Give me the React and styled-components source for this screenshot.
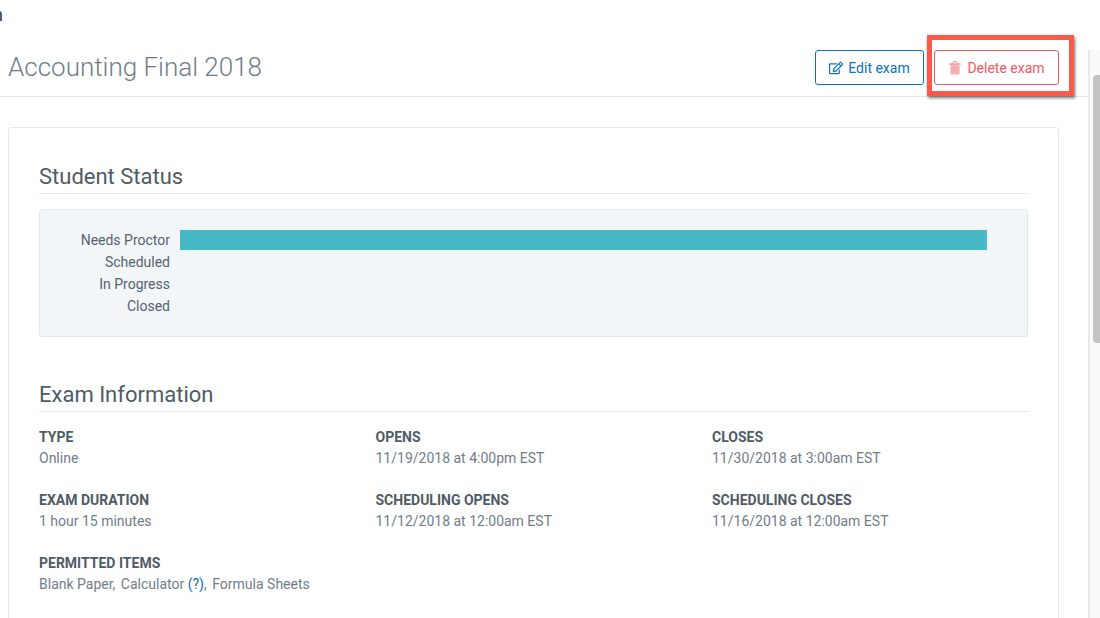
import React from "react";
import styled, { createGlobalStyle } from "styled-components";
import { FaRegEdit } from "react-icons/fa";

const Global = createGlobalStyle`
  html, body { margin: 0; padding: 0; background: #fff; height: 100%; overflow: hidden; }
  body { font-family: Roboto, "Liberation Sans", sans-serif; color: #4f5b66; }
`;

const Page = styled.div`
  width: 1100px;
  height: 618px;
  overflow: hidden;
  display: flex;
  flex-direction: column;
`;
const TopStrip = styled.div`
  height: 50px;
  flex: none;
  overflow: hidden;
  font-size: 18px;
  line-height: 18px;
  color: #2b3a44;
  padding-top: 6px;
  margin-left: -7px;
  box-sizing: border-box;
`;
const Body = styled.div`
  flex: 1;
  display: flex;
  min-height: 0;
`;
const Main = styled.main`
  width: 1089px;
  flex: none;
  box-sizing: border-box;
  border-right: 1px solid #e4e9ec;
  min-height: 0;
`;
const Scrollbar = styled.div`
  flex: 1;
  background: #fafafa;
  border-left: 1px solid #ececec;
  padding: 25px 0 0 3px;
`;
const Thumb = styled.div`
  height: 268px;
  background: #c3c3c3;
  border-radius: 4px 0 0 4px;
`;
const Header = styled.header`
  height: 47px;
  box-sizing: border-box;
  border-bottom: 1px solid #e3e7eb;
  display: flex;
  align-items: flex-start;
  justify-content: space-between;
  padding: 0 29px 0 8px;
`;
const Title = styled.h1`
  margin: 0;
  font-size: 26px;
  line-height: 34px;
  font-weight: 300;
  color: #6f7d8b;
`;
const Actions = styled.div`
  display: flex;
  gap: 10px;
  position: relative;
`;
const Button = styled.button`
  height: 35px;
  box-sizing: border-box;
  display: inline-flex;
  align-items: center;
  justify-content: center;
  gap: ${p => p.$gap}px;
  width: ${p => p.$w}px;
  border: 1px solid ${p => p.$color};
  color: ${p => p.$color};
  background: #fff;
  border-radius: 3px;
  font-family: inherit;
  font-size: 14px;
  padding: 0 0 0 ${p => p.$gap - 5}px;
`;
const Highlight = styled.div`
  position: absolute;
  left: 112px;
  top: -15px;
  width: 147px;
  height: 61px;
  box-sizing: border-box;
  border: 5px solid #fb5a4b;
  box-shadow: 1px 2px 3px rgba(0,0,0,.55);
  pointer-events: none;
`;
const Card = styled.section`
  margin: 30px 29px 0 8px;
  border: 1px solid #e6eaed;
  border-radius: 3px;
  padding: 30px;
  height: 560px;
  box-sizing: border-box;
`;
const SectionTitle = styled.h2`
  margin: ${p => p.$top || 0}px 0 15px;
  font-size: 22px;
  line-height: 37px;
  height: 35px;
  font-weight: 400;
  color: #4f5b66;
  border-bottom: 1px solid #e6e9ec;
`;
const ChartPanel = styled.div`
  height: 128px;
  box-sizing: border-box;
  background: #f2f6f9;
  border: 1px solid #e3e8ec;
  border-radius: 3px;
  padding: 20px 40px 0 0;
`;
const ChartRow = styled.div`
  display: flex;
  align-items: flex-start;
  height: 22px;
`;
const ChartLabel = styled.div`
  width: 130px;
  flex: none;
  margin-right: 10px;
  text-align: right;
  font-size: 14px;
  line-height: 20px;
  color: #56636f;
`;
const Bar = styled.div`
  height: 20px;
  flex: 1;
  background: #47b9c6;
`;
const InfoGrid = styled.div`
  display: grid;
  grid-template-columns: 336.5px 336.5px 1fr;
  row-gap: 21px;
`;
const InfoItem = styled.div`
  font-size: 14px;
  line-height: 21px;
`;
const InfoLabel = styled.div`
  font-weight: 700;
  color: #4f5b66;
`;
const InfoValue = styled.div`
  color: #6f7d8b;
`;
const Hint = styled.a`
  color: #0b72bd;
`;
const PermittedItem = styled.span`
  margin-right: 5.5px;
`;

const TrashIcon = () => (
  <svg width="12" height="14" viewBox="0 0 12 14">
    <path d="M3.8 2.6V1.4q0-.7.7-.7h3q.7 0 .7.7v1.2" fill="none" stroke="#ef8f94" strokeWidth="1" />
    <rect x="0.3" y="2.4" width="11.4" height="1.3" fill="#ef8489" />
    <path d="M1.4 4.2h9.2v8.2q0 1-1 1H2.4q-1 0-1-1z" fill="#f5adb0" />
  </svg>
);

const rows = ["Needs Proctor", "Scheduled", "In Progress", "Closed"];
const info = [
  ["TYPE", "Online"],
  ["OPENS", "11/19/2018 at 4:00pm EST"],
  ["CLOSES", "11/30/2018 at 3:00am EST"],
  ["EXAM DURATION", "1 hour 15 minutes"],
  ["SCHEDULING OPENS", "11/12/2018 at 12:00am EST"],
  ["SCHEDULING CLOSES", "11/16/2018 at 12:00am EST"],
];

export default function App() {
  return (
    <Page>
      <Global />
      <TopStrip>n</TopStrip>
      <Body>
        <Main>
          <Header>
            <Title>Accounting Final 2018</Title>
            <Actions>
              <Button $w={109} $gap={5} $color="#0b72bd"><FaRegEdit size={14} />Edit exam</Button>
              <Button $w={125} $gap={6} $color="#ef5a62"><TrashIcon />Delete exam</Button>
              <Highlight />
            </Actions>
          </Header>
          <Card>
            <SectionTitle>Student Status</SectionTitle>
            <ChartPanel>
              {rows.map((r, i) => (
                <ChartRow key={r}>
                  <ChartLabel>{r}</ChartLabel>
                  {i === 0 && <Bar />}
                </ChartRow>
              ))}
            </ChartPanel>
            <SectionTitle $top={39}>Exam Information</SectionTitle>
            <InfoGrid>
              {info.map(([l, v]) => (
                <InfoItem key={l}>
                  <InfoLabel>{l}</InfoLabel>
                  <InfoValue>{v}</InfoValue>
                </InfoItem>
              ))}
              <InfoItem>
                <InfoLabel>PERMITTED ITEMS</InfoLabel>
                <InfoValue>
                  <PermittedItem>Blank Paper,</PermittedItem>
                  <PermittedItem>Calculator <Hint>(?)</Hint>,</PermittedItem>
                  Formula Sheets
                </InfoValue>
              </InfoItem>
            </InfoGrid>
          </Card>
        </Main>
        <Scrollbar><Thumb /></Scrollbar>
      </Body>
    </Page>
  );
}
